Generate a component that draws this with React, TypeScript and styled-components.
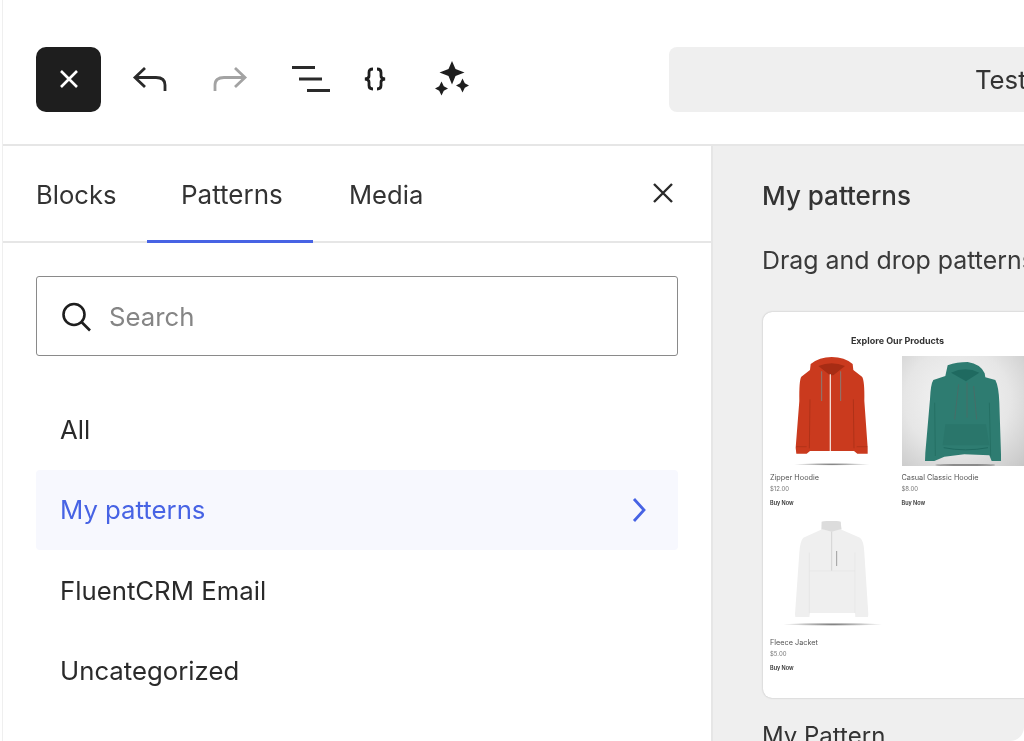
import React from "react";
import styled, { createGlobalStyle } from "styled-components";

const GlobalStyle = createGlobalStyle`
  html, body {
    margin: 0;
    padding: 0;
    height: 100%;
    background: #fff;
    overflow: hidden;
  }
  body {
    font-family: Inter, "Liberation Sans", sans-serif;
    color: #2a2a2a;
  }
`;

// the reference is a slightly soft, upscaled capture
const Frame = styled.div`
  width: 1024px;
  height: 741px;
  box-sizing: border-box;
  padding-left: 2px;
  background: #fff;
  overflow: hidden;
  filter: blur(0.4px);
`;

const Window = styled.div`
  height: 741px;
  border-left: 1px solid #efefef;
  border-bottom-right-radius: 14px;
  display: flex;
  flex-direction: column;
  overflow: hidden;
`;

const Toolbar = styled.header`
  height: 146px;
  flex: none;
  display: flex;
  align-items: center;
  padding: 14px 0 0 33px;
  box-sizing: border-box;
  border-bottom: 2px solid #e6e6e6;
`;

const CloseSquare = styled.div`
  width: 65px;
  height: 65px;
  flex: none;
  border-radius: 10px;
  background: #1e1e1e;
  display: flex;
  align-items: center;
  justify-content: center;
`;

const ToolIcon = styled.svg<{ $left: number }>`
  flex: none;
  margin-left: ${(p) => p.$left}px;
`;

const TitleBar = styled.div`
  margin-left: 200px;
  flex: 1;
  height: 65px;
  border-radius: 8px 0 0 8px;
  background: #efefef;
  display: flex;
  align-items: center;
  padding-left: 306px;
  font-size: 25.75px;
  white-space: nowrap;
  color: #333;
`;

const Body = styled.div`
  flex: 1;
  display: flex;
  min-height: 0;
`;

const Sidebar = styled.aside`
  width: 708px;
  flex: none;
  border-right: 2px solid #e6e6e6;
  box-sizing: content-box;
`;

const TabBar = styled.nav`
  height: 97px;
  box-sizing: border-box;
  border-bottom: 2px solid #e6e6e6;
  display: flex;
  align-items: stretch;
  padding-left: 33px;
  position: relative;
`;

const Tab = styled.div<{ $active?: boolean; $width: number; $inset?: number }>`
  width: ${(p) => p.$width}px;
  display: flex;
  align-items: center;
  height: 97px;
  box-sizing: border-box;
  padding: 3px 0 0 ${(p) => p.$inset ?? 0}px;
  font-size: ${(p) => (p.$active ? 26 : 25.6)}px;
  color: #333;
  border-bottom: 3px solid ${(p) => (p.$active ? "#4763e4" : "transparent")};
`;

const TabClose = styled.svg`
  position: absolute;
  right: 37px;
  top: 36px;
`;

const SearchBox = styled.div`
  margin: 33px 33px 0;
  height: 80px;
  box-sizing: border-box;
  border: 1.5px solid #8a8a8a;
  border-radius: 3px;
  display: flex;
  align-items: center;
  gap: 17px;
  padding: 1px 0 0 23px;
  font-size: 25.75px;
  color: #858585;
`;

const CategoryList = styled.ul`
  list-style: none;
  margin: 33px 33px 0;
  padding: 0;
`;

const Category = styled.li<{ $active?: boolean }>`
  height: 80.5px;
  display: flex;
  align-items: center;
  justify-content: space-between;
  padding: 0 31px 0 24px;
  border-radius: 4px;
  font-size: 25.75px;
  color: ${(p) => (p.$active ? "#4763e4" : "#2a2a2a")};
  background: ${(p) => (p.$active ? "#f7f8fe" : "transparent")};
`;

const Preview = styled.main`
  flex: 1;
  background: #efefef;
  padding: 0 0 0 49px;
  overflow: hidden;
  min-width: 0;
`;

const PreviewTitle = styled.h2`
  margin: 33px 0 0;
  font-size: 26px;
  line-height: 34px;
  font-weight: 500;
  color: #333;
  white-space: nowrap;
`;

const PreviewHint = styled.p`
  margin: 30px 0 0;
  font-size: 24.9px;
  line-height: 34px;
  color: #3a3a3a;
  white-space: nowrap;
`;

const PatternCard = styled.div`
  margin: 35px 0 0 1px;
  width: 340px;
  height: 386px;
  box-sizing: border-box;
  background: #fff;
  border-radius: 9px;
  box-shadow: 0 0 2px rgba(0, 0, 0, 0.25);
  padding: 22px 0 0 7px;
`;

const CardContent = styled.div`
  filter: blur(0.35px);
`;

const CardHeading = styled.div`
  width: 255px;
  text-align: center;
  font-size: 9px;
  line-height: 13px;
  font-weight: 700;
  color: #333;
`;

const ProductGrid = styled.div`
  margin-top: 9px;
  display: grid;
  grid-template-columns: 131.5px 132px;
  grid-auto-rows: 165px;
`;

const Product = styled.div`
  display: flex;
  flex-direction: column;
`;

const Photo = styled.div<{ $tinted?: boolean }>`
  width: 123px;
  height: 110px;
  flex: none;
  background: ${(p) =>
    p.$tinted
      ? "radial-gradient(ellipse at 45% 40%, #f6f6f6 0%, #e6e6e6 55%, #c6c6c6 100%)"
      : "transparent"};
  & > svg {
    display: block;
  }
`;

const ProductName = styled.div`
  margin-top: 6px;
  font-size: 7.3px;
  line-height: 12px;
  color: #555;
`;

const ProductPrice = styled.div`
  font-size: 6px;
  line-height: 10px;
  color: #777;
`;

const BuyNow = styled.div`
  font-size: 5.5px;
  line-height: 10px;
  margin-top: 4px;
  font-weight: 600;
  color: #333;
`;

const PatternName = styled.div`
  margin-top: 21px;
  font-size: 24px;
  line-height: 34px;
  color: #333;
  white-space: nowrap;
`;

const RedHoodie = () => (
  <svg width="123" height="110" viewBox="0 0 369 330">
    <defs>
      <radialGradient id="floorA">
        <stop offset="0%" stopColor="#777" />
        <stop offset="100%" stopColor="#777" stopOpacity="0" />
      </radialGradient>
    </defs>
    <path d="M122 24 Q148 3 185 3 Q224 3 248 24 L250 42 L276 62 Q284 72 283 135 L293 275 L293 293 L262 293 L252 285 L120 285 L110 293 L79 293 L77 275 L88 135 Q87 72 94 62 L120 42 Z" fill="#ca3a1e" />
    <path d="M145 30 Q185 14 225 30 L190 58 L180 58 Z" fill="#a72c14" />
    <path d="M120 130 L118 277 M250 130 L252 277" stroke="#a93017" strokeWidth="2.5" fill="none" />
    <path d="M78 272 H110 M260 272 H292" stroke="#a93017" strokeWidth="2" />
    <path d="M181 55 V285" stroke="#f2d9d2" strokeWidth="4" />
    <path d="M155 46 V135 M212 46 V135" stroke="#8a7a74" strokeWidth="3" />
    <ellipse cx="185" cy="325" rx="115" ry="4" fill="url(#floorA)" />
  </svg>
);

const TealHoodie = () => (
  <svg width="123" height="110" viewBox="0 0 369 330">
    <path d="M137 28 Q165 18 197 18 Q236 24 248 52 L250 64 L280 72 Q290 90 292 140 L297 295 L297 315 L269 315 L262 298 L187 295 L127 302 L97 315 L69 315 L70 290 L84 130 Q86 84 94 72 L130 60 Z" fill="#2e7c71" />
    <path d="M147 50 Q190 30 232 50 L192 76 Z" fill="#1f6a60" />
    <path d="M130 205 H252 L262 268 H122 Z" fill="#2a766b" />
    <path d="M125 275 Q190 288 258 275" stroke="#1f6a60" strokeWidth="3" fill="none" />
    <path d="M170 85 L158 190 M195 80 V185 M215 90 L224 190" stroke="#4d6a66" strokeWidth="3" opacity="0.8" />
    <path d="M98 140 L100 300 M262 140 L266 300" stroke="#236d62" strokeWidth="2.5" fill="none" />
    <ellipse cx="190" cy="327" rx="90" ry="3" fill="#555" opacity="0.6" />
  </svg>
);

const FleeceJacket = () => (
  <svg width="123" height="110" viewBox="0 0 369 330">
    <defs>
      <radialGradient id="floorB">
        <stop offset="0%" stopColor="#777" />
        <stop offset="100%" stopColor="#777" stopOpacity="0" />
      </radialGradient>
    </defs>
    <path d="M155 2 Q185 -3 212 2 L215 26 L270 50 Q282 60 283 95 L295 280 L294 288 L256 288 L255 276 L120 276 L118 288 L76 288 L75 280 L88 95 Q90 60 100 50 L153 26 Z" fill="#efefef" />
    <path d="M155 2 Q185 -3 212 2 L214 24 L185 32 L155 24 Z" fill="#dcdcdc" />
    <path d="M185 32 V150" stroke="#d4d4d4" strokeWidth="3" />
    <path d="M200 90 V135" stroke="#9d9d9d" strokeWidth="3" />
    <path d="M118 150 H255 M118 95 V276 M255 95 V276" stroke="#e6e6e6" strokeWidth="2.5" fill="none" />
    <ellipse cx="188" cy="310" rx="150" ry="5" fill="url(#floorB)" />
  </svg>
);

const products = [
  { name: "Zipper Hoodie", price: "$12.00", photo: <RedHoodie /> },
  { name: "Casual Classic Hoodie", price: "$8.00", photo: <TealHoodie />, tinted: true },
  { name: "Fleece Jacket", price: "$5.00", photo: <FleeceJacket /> },
];

const categories = ["All", "My patterns", "FluentCRM Email", "Uncategorized"];

export default function App() {
  return (
    <>
      <GlobalStyle />
      <Frame>
        <Window>
          <Toolbar>
            <CloseSquare>
              <svg width="22" height="22" viewBox="0 0 22 22" fill="none" stroke="#fff" strokeWidth="2.6">
                <path d="M3 3 L19 19 M19 3 L3 19" />
              </svg>
            </CloseSquare>
            <ToolIcon $left={31} width="36" height="26" viewBox="0 0 36 26" fill="none" stroke="#2a2a2a" strokeWidth="2.8">
              <path d="M13 2 L3 11.5 L13 21" />
              <path d="M3 11.5 H24 Q33 11.5 33 19 V25" />
            </ToolIcon>
            <ToolIcon $left={44} width="36" height="26" viewBox="0 0 36 26" fill="none" stroke="#a3a3a3" strokeWidth="2.8">
              <path d="M23 2 L33 11.5 L23 21" />
              <path d="M33 11.5 H12 Q3 11.5 3 19 V25" />
            </ToolIcon>
            <ToolIcon $left={44} width="38" height="26" viewBox="0 0 38 26" fill="none" stroke="#2a2a2a" strokeWidth="2.8">
              <path d="M0 1.5 H23 M7 13 H30 M15 24.5 H38" />
            </ToolIcon>
            <ToolIcon $left={33} width="24" height="24" viewBox="0 0 24 24" fill="none" stroke="#1e1e1e" strokeWidth="2.8">
              <path d="M10 2 Q6 2 6 5.5 V9 Q6 11.5 2 12 Q6 12.5 6 15 V18.5 Q6 22 10 22" />
              <path d="M14 2 Q18 2 18 5.5 V9 Q18 11.5 22 12 Q18 12.5 18 15 V18.5 Q18 22 14 22" />
            </ToolIcon>
            <ToolIcon $left={48} width="34" height="36" viewBox="0 0 34 36" fill="#1e1e1e">
              <path d="M17 0 L20.5 8 L29.5 11.5 L20.5 15 L17 23.5 L13.5 15 L4.5 11.5 L13.5 8 Z" />
              <path d="M6.5 20.5 L8.8 25.2 L13 27.5 L8.8 29.8 L6.5 34.5 L4.2 29.8 L0 27.5 L4.2 25.2 Z" />
              <path d="M27.5 17.5 L29.8 22.2 L34 24.5 L29.8 26.8 L27.5 31.5 L25.2 26.8 L21 24.5 L25.2 22.2 Z" />
            </ToolIcon>
            <TitleBar>Test</TitleBar>
          </Toolbar>
          <Body>
            <Sidebar>
              <TabBar>
                <Tab $width={111}>Blocks</Tab>
                <Tab $active $width={166} $inset={34}>Patterns</Tab>
                <Tab $width={110} $inset={36}>Media</Tab>
                <TabClose width="22" height="22" viewBox="0 0 22 22" fill="none" stroke="#2a2a2a" strokeWidth="2.4">
                  <path d="M2 2 L20 20 M20 2 L2 20" />
                </TabClose>
              </TabBar>
              <SearchBox>
                <svg width="32" height="32" viewBox="0 0 32 32" fill="none" stroke="#1e1e1e" strokeWidth="2.6">
                  <circle cx="14" cy="13.5" r="10.5" />
                  <path d="M21.5 21 L30 29.5" />
                </svg>
                Search
              </SearchBox>
              <CategoryList>
                {categories.map((c) => (
                  <Category key={c} $active={c === "My patterns"}>
                    {c}
                    {c === "My patterns" && (
                      <svg width="16" height="26" viewBox="0 0 16 26" fill="none" stroke="#4763e4" strokeWidth="2.8">
                        <path d="M3 2 L13 13 L3 24" />
                      </svg>
                    )}
                  </Category>
                ))}
              </CategoryList>
            </Sidebar>
            <Preview>
              <PreviewTitle>My patterns</PreviewTitle>
              <PreviewHint>Drag and drop patterns</PreviewHint>
              <PatternCard>
                <CardContent>
                  <CardHeading>Explore Our Products</CardHeading>
                  <ProductGrid>
                    {products.map((p) => (
                      <Product key={p.name}>
                        <Photo $tinted={p.tinted}>{p.photo}</Photo>
                        <ProductName>{p.name}</ProductName>
                        <ProductPrice>{p.price}</ProductPrice>
                        <BuyNow>Buy Now</BuyNow>
                      </Product>
                    ))}
                  </ProductGrid>
                </CardContent>
              </PatternCard>
              <PatternName>My Pattern</PatternName>
            </Preview>
          </Body>
        </Window>
      </Frame>
    </>
  );
}
